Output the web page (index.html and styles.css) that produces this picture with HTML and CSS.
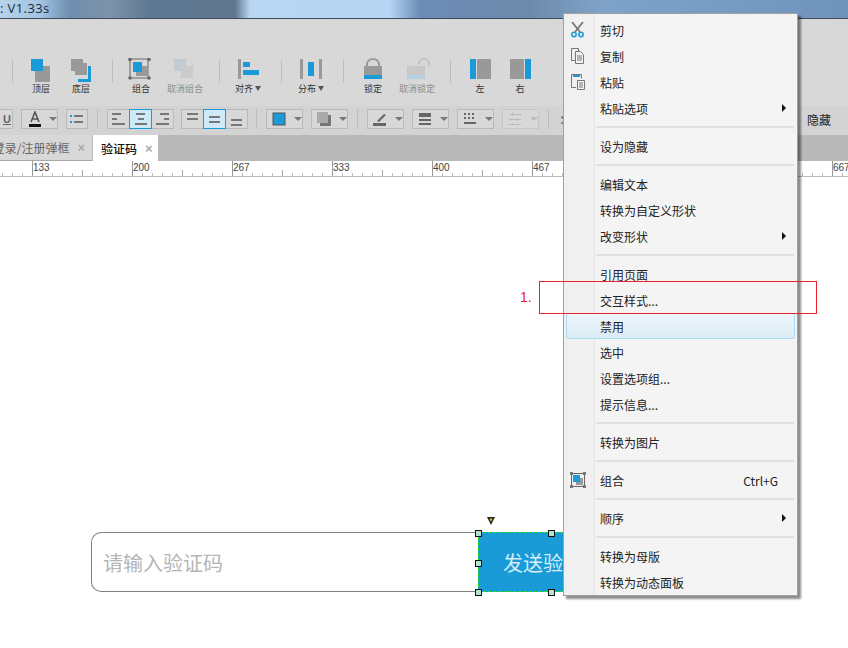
FILE: index.html
```html
<!DOCTYPE html>
<html lang="zh-CN">
<head>
  <meta charset="UTF-8">
  <title>验证码</title>
  <link rel="stylesheet" href="styles.css">
</head>
<body>
  <div class="app">
    <div class="titlebar">: V1.33s</div>

    <div class="toolbar">
      <span class="tool-sep first"></span>
      <div class="tool w40">
        <svg width="40" height="24"><path fill="#999" d="M24 13h2v-4h3v16h-15v-4h10z" transform="translate(0 -1)"/><rect x="14" y="8" width="12" height="12" fill="#999"/><rect x="10" y="1" width="12" height="12" fill="#1a9bd8"/></svg>
        <span>顶层</span>
      </div>
      <div class="tool w40">
        <svg width="40" height="24"><rect x="10" y="1" width="12" height="12" fill="#999"/><rect x="14" y="5" width="12" height="12" fill="#999"/><path fill="#1a9bd8" d="M27 8h3v16h-13v-3h10z"/></svg>
        <span>底层</span>
      </div>
      <span class="tool-sep s1"></span>
      <div class="tool w44">
        <svg width="44" height="24"><rect x="11" y="1" width="18" height="19" fill="none" stroke="#666"/><circle cx="11" cy="1.5" r="1.8" fill="#666"/><circle cx="30" cy="1.5" r="1.8" fill="#666"/><circle cx="11" cy="20" r="1.8" fill="#666"/><circle cx="30" cy="20" r="1.8" fill="#666"/><rect x="17" y="8" width="12" height="10" fill="#999"/><rect x="14" y="4" width="9" height="10" fill="#1a9bd8"/></svg>
        <span>组合</span>
      </div>
      <div class="tool w44 off">
        <svg width="44" height="24"><rect x="11" y="1" width="12" height="12" fill="#c0ccd2"/><rect x="18" y="8" width="12" height="12" fill="#cbcbcb"/><circle cx="11" cy="1.5" r="1.3" fill="#ccc"/><circle cx="23" cy="1.5" r="1.3" fill="#ccc"/><circle cx="18" cy="20" r="1.3" fill="#ccc"/><circle cx="30" cy="8" r="1.3" fill="#ccc"/></svg>
        <span>取消组合</span>
      </div>
      <span class="tool-sep s2"></span>
      <div class="tool w44">
        <svg width="44" height="24"><rect x="12" y="1" width="3" height="20" fill="#999"/><rect x="17" y="4" width="7" height="5" fill="#1a9bd8"/><rect x="17" y="12" width="16" height="5" fill="#1a9bd8"/></svg>
        <span>对齐 <i class="mini-caret"></i></span>
      </div>
      <span class="tool-sep s3"></span>
      <div class="tool w44">
        <svg width="44" height="24"><rect x="11" y="1" width="3" height="20" fill="#999"/><rect x="19" y="4" width="6" height="14" fill="#1a9bd8"/><rect x="30" y="1" width="3" height="20" fill="#999"/></svg>
        <span>分布 <i class="mini-caret"></i></span>
      </div>
      <span class="tool-sep s4"></span>
      <div class="tool w44">
        <svg width="44" height="24"><path d="M16 8V6a6 5 0 0 1 12 0v2" fill="none" stroke="#999" stroke-width="2"/><rect x="13" y="8" width="18" height="9" fill="#999"/><rect x="13" y="17" width="18" height="4" fill="#1a9bd8"/></svg>
        <span>锁定</span>
      </div>
      <div class="tool w44 off">
        <svg width="44" height="24"><path d="M24 7V5a5 4 0 0 1 10 0v3" fill="none" stroke="#c4c4c4" stroke-width="2"/><rect x="12" y="8" width="18" height="9" fill="#c8c8c8"/><rect x="12" y="17" width="18" height="4" fill="#b5d0de"/></svg>
        <span>取消锁定</span>
      </div>
      <span class="tool-sep s5"></span>
      <div class="tool w40">
        <svg width="40" height="24"><rect x="10" y="1" width="6" height="20" fill="#1a9bd8"/><rect x="17" y="1" width="14" height="20" fill="#999"/></svg>
        <span>左</span>
      </div>
      <div class="tool w40">
        <svg width="40" height="24"><rect x="10" y="1" width="14" height="20" fill="#999"/><rect x="25" y="1" width="6" height="20" fill="#1a9bd8"/></svg>
        <span>右</span>
      </div>
    </div>

    <div class="formatbar">
      <div class="fbtn underline"><span>U</span></div>
      <div class="fbtn drop w37">
        <svg width="16" height="16"><path d="M4 11 8 1l4 10M5.500 8h5" fill="none" stroke="#555" stroke-width="1.600"/><rect x="2" y="13" width="12" height="3" fill="#111"/></svg>
        <i class="caret"></i>
      </div>
      <div class="fbtn w22">
        <svg width="14" height="10"><path d="M0 1h2v2H0zM0 7h2v2H0z" fill="#1a9bd8"/><path d="M4 1h9v2H4zM4 7h9v2H4z" fill="#777"/></svg>
      </div>
      <span class="fmt-sep"></span>
      <div class="fgroup">
        <div class="fbtn w22 seg"><svg width="14" height="12"><path d="M0 0h9v2H0zM0 5h5v2H0zM0 10h13v2H0z" fill="#777"/></svg></div>
        <div class="fbtn w22 seg on"><svg width="14" height="12"><path d="M2 0h9v2H2zM4 5h6v2H4zM1 10h12v2H1z" fill="#777"/></svg></div>
        <div class="fbtn w22 seg"><svg width="14" height="12"><path d="M4 0h9v2H4zM8 5h5v2H8zM0 10h13v2H0z" fill="#777"/></svg></div>
      </div>
      <div class="fgroup">
        <div class="fbtn w22 seg valign-top"><svg width="12" height="7"><path d="M0 0h11v2H0zM0 5h11v2H0z" fill="#777"/></svg></div>
        <div class="fbtn w22 seg on"><svg width="12" height="7"><path d="M0 0h11v2H0zM0 5h11v2H0z" fill="#777"/></svg></div>
        <div class="fbtn w22 seg valign-bottom"><svg width="12" height="7"><path d="M0 0h11v2H0zM0 5h11v2H0z" fill="#777"/></svg></div>
      </div>
      <span class="fmt-sep"></span>
      <div class="fbtn drop w37">
        <svg width="14" height="14"><rect x="1" y="1" width="12" height="12" fill="#1a9bd8" stroke="#555"/></svg>
        <i class="caret"></i>
      </div>
      <div class="fbtn drop w37">
        <svg width="14" height="14"><rect x="3" y="3" width="11" height="11" fill="#777"/><rect x="0" y="0" width="11" height="11" fill="#aaa"/></svg>
        <i class="caret"></i>
      </div>
      <span class="fmt-sep"></span>
      <div class="fbtn drop w37">
        <svg width="14" height="14"><path d="M4 9 11 2l2 1-7 7z" fill="#666"/><rect x="0" y="11" width="13" height="3" fill="#666"/></svg>
        <i class="caret"></i>
      </div>
      <div class="fbtn drop w37">
        <svg width="14" height="12"><path d="M1 0h12v4H1zM1 6h12v2H1zM1 10h12v2H1z" fill="#666"/></svg>
        <i class="caret"></i>
      </div>
      <div class="fbtn drop w37">
        <svg width="14" height="12"><path d="M1 0h2v2H1zM5 0h2v2H5zM9 0h2v2H9zM1 4h2v2H1zM5 4h2v2H5zM9 4h2v2H9zM1 9h12v2H1z" fill="#666"/></svg>
        <i class="caret"></i>
      </div>
      <div class="fbtn drop w37 muted">
        <svg width="14" height="12"><path d="M1 1h12v1H1zM1 6h12v1H1zM1 11h12v1H1z" fill="#bbb"/><path d="M4 0h1v3H4zM9 5h1v3H9zM4 10h1v2H4z" fill="#bbb"/></svg>
        <i class="caret"></i>
      </div>
      <span class="fmt-sep"></span>
      <span class="more">×</span>
      <span class="hide-label">隐藏</span>
    </div>

    <div class="tabs">
      <div class="tab first"><span>登录/注册弹框</span><b>×</b></div>
      <div class="tab active"><span>验证码</span><b>×</b></div>
    </div>

    <div class="ruler">
      <span>133</span><span>200</span><span>267</span><span>333</span><span>400</span><span>467</span><span>533</span><span>600</span><span>667</span>
    </div>

    <div class="canvas">
      <div class="code-input">请输入验证码</div>
      <div class="send-btn">发送验证码</div>
      <i class="handle h1"></i>
      <i class="handle h2"></i>
      <i class="handle h3"></i>
      <i class="handle h4"></i>
      <i class="handle h5"></i>
      <svg class="flag" width="9" height="9"><path d="M0 0h8L4 8z" fill="#222"/><path d="M2.500 1.500h3L4 5z" fill="#e8c020"/></svg>
    </div>
  </div>

  <div class="menu">
    <div class="menu-item">
      <span class="menu-icon"><svg width="16" height="16"><path d="M2 0l8 10M13 0 5 10" stroke="#777" stroke-width="1.800" fill="none"/><circle cx="4" cy="12.500" r="2.200" fill="none" stroke="#1a9bd8" stroke-width="1.500"/><circle cx="11" cy="12.500" r="2.200" fill="none" stroke="#1a9bd8" stroke-width="1.500"/></svg></span>
      <span class="menu-label">剪切</span>
    </div>
    <div class="menu-item">
      <span class="menu-icon"><svg width="16" height="16"><path d="M1.500.5h7v3M5 12.500H1.500V.5" fill="none" stroke="#777"/><path d="M5.500 3.500h5l3 3v9h-8z" fill="#f3f3f3" stroke="#777"/><path d="M7 8h5M7 10h5M7 12h5" stroke="#777"/></svg></span>
      <span class="menu-label">复制</span>
    </div>
    <div class="menu-item">
      <span class="menu-icon"><svg width="16" height="16"><path d="M6 13.500H1.500V.5h10v4" fill="none" stroke="#777"/><rect x="3" y="1" width="7" height="2" fill="#1a9bd8"/><path d="M7.500 6.500h7v9h-7z" fill="#f3f3f3" stroke="#777"/><path d="M9 9h4M9 11h4M9 13h4" stroke="#777"/></svg></span>
      <span class="menu-label">粘贴</span>
    </div>
    <div class="menu-item">
      <span class="menu-icon"></span>
      <span class="menu-label">粘贴选项</span>
      <i class="sub-arrow"></i>
    </div>
    <div class="menu-sep"></div>
    <div class="menu-item"><span class="menu-icon"></span><span class="menu-label">设为隐藏</span></div>
    <div class="menu-sep"></div>
    <div class="menu-item"><span class="menu-icon"></span><span class="menu-label">编辑文本</span></div>
    <div class="menu-item"><span class="menu-icon"></span><span class="menu-label">转换为自定义形状</span></div>
    <div class="menu-item">
      <span class="menu-icon"></span>
      <span class="menu-label">改变形状</span>
      <i class="sub-arrow"></i>
    </div>
    <div class="menu-sep"></div>
    <div class="menu-item"><span class="menu-icon"></span><span class="menu-label">引用页面</span></div>
    <div class="menu-item"><span class="menu-icon"></span><span class="menu-label">交互样式...</span></div>
    <div class="menu-item hover"><span class="menu-icon"></span><span class="menu-label">禁用</span></div>
    <div class="menu-item"><span class="menu-icon"></span><span class="menu-label">选中</span></div>
    <div class="menu-item"><span class="menu-icon"></span><span class="menu-label">设置选项组...</span></div>
    <div class="menu-item"><span class="menu-icon"></span><span class="menu-label">提示信息...</span></div>
    <div class="menu-sep"></div>
    <div class="menu-item"><span class="menu-icon"></span><span class="menu-label">转换为图片</span></div>
    <div class="menu-sep"></div>
    <div class="menu-item">
      <span class="menu-icon"><svg width="16" height="16"><rect x="1.500" y="1.500" width="13" height="13" fill="none" stroke="#666"/><path d="M0 0h3v3H0zM13 0h3v3h-3zM0 13h3v3H0zM13 13h3v3h-3z" fill="#777"/><rect x="6" y="6" width="7" height="7" fill="#999"/><rect x="3" y="3" width="7" height="7" fill="#1a9bd8"/></svg></span>
      <span class="menu-label">组合</span>
      <span class="shortcut">Ctrl+G</span>
    </div>
    <div class="menu-sep"></div>
    <div class="menu-item">
      <span class="menu-icon"></span>
      <span class="menu-label">顺序</span>
      <i class="sub-arrow"></i>
    </div>
    <div class="menu-sep"></div>
    <div class="menu-item"><span class="menu-icon"></span><span class="menu-label">转换为母版</span></div>
    <div class="menu-item"><span class="menu-icon"></span><span class="menu-label">转换为动态面板</span></div>
  </div>

  <span class="note-num">1.</span>
  <div class="note-box"></div>
</body>
</html>
```

FILE: styles.css
```css
* {
  box-sizing: border-box;
}

html, body {
  margin: 0;
  height: 100%;
  overflow: hidden;
}

body {
  position: relative;
  background: #fff;
  color: #222;
  font-family: "Noto Sans CJK SC", "Liberation Sans", sans-serif;
  font-size: 12px;
}

.app {
  height: 648px;
  display: flex;
  flex-direction: column;
}

/* title bar, blurred window glass behind it */
.titlebar {
  height: 19px;
  padding: 0 0 2px 0;
  font-family: "Open Sans", sans-serif;
  font-size: 13px;
  line-height: 17px;
  letter-spacing: .4px;
  color: #1c2a3a;
  border-bottom: 1px solid #3e4a5c;
  background: linear-gradient(90deg, #b7d2ea 0, #a4c4e2 40px, #6f8fb0 70px, #7d93aa 110px, #5d7892 150px, #60778f 235px, #b7d6f2 250px, #b5d5f4 390px, #6c8cb8 420px, #6d8aab 530px, #7fa3c8 600px, #6f93bb 848px);
}

.toolbar {
  height: 87px;
  flex: none;
  display: flex;
  align-items: flex-start;
  padding-top: 39px;
  background: #d8d8d8;
}

.tool {
  flex: none;
  display: flex;
  flex-direction: column;
  align-items: center;
  height: 46px;
  font-size: 9px;
  line-height: 12px;
  color: #333;
  white-space: nowrap;
}

.tool span {
  margin-top: 1px;
}

.tool.w40 {
  width: 40px;
}

.tool.w44 {
  width: 44px;
}

.tool.off {
  color: #8c8c8c;
}

.mini-caret {
  display: inline-block;
  width: 0;
  height: 0;
  border: 3px solid transparent;
  border-top: 5px solid #555;
  border-bottom: 0;
  vertical-align: 1px;
}

.tool-sep {
  flex: none;
  width: 1px;
  height: 23px;
  margin-top: 2px;
  background: #bdbdbd;
}

.tool-sep.first {
  margin-left: 12px;
  margin-right: 8px;
}

.tool-sep.s1 {
  margin-left: 11px;
  margin-right: 6px;
}

.tool-sep.s2 {
  margin-left: 12px;
  margin-right: 6px;
}

.tool-sep.s3 {
  margin-left: 11px;
  margin-right: 7px;
}

.tool-sep.s4 {
  margin-left: 10px;
  margin-right: 7px;
}

.tool-sep.s5 {
  margin-left: 11px;
  margin-right: 9px;
}

.formatbar {
  height: 29px;
  flex: none;
  display: flex;
  align-items: center;
  padding-bottom: 4px;
  padding-top: 1px;
  background: #d3d3d3;
  gap: 8px;
}

.fbtn {
  flex: none;
  height: 20px;
  display: flex;
  align-items: center;
  justify-content: center;
  border: 1px solid #b9b9b9;
  background: #d8d8d8;
}

.fbtn.underline {
  width: 13px;
  justify-content: flex-end;
  padding-right: 1px;
  border-left: 0;
  font: bold 11px "Liberation Sans", sans-serif;
  color: #666;
  text-decoration: underline;
}

.fbtn.w22 {
  width: 22px;
}

.fbtn.w37 {
  width: 37px;
}

.fbtn.drop {
  justify-content: flex-start;
  padding-left: 5px;
  gap: 8px;
}

.fbtn.muted {
  border-color: #c6c6c6;
}

.fbtn.seg {
  margin-right: -1px;
  width: 23px;
}

.fbtn.on {
  position: relative;
  z-index: 1;
  border-color: #1a9bd8;
  background: #cfeaf7;
}

.fbtn.valign-top {
  align-items: flex-start;
  padding-top: 3px;
}

.fbtn.valign-bottom {
  align-items: flex-end;
  padding-bottom: 2px;
}

.fgroup {
  flex: none;
  display: flex;
  width: 66px;
}

.caret {
  width: 0;
  height: 0;
  border: 4px solid transparent;
  border-top: 4px solid #777;
  border-bottom: 0;
}

.muted .caret {
  border-top-color: #bbb;
}

.fmt-sep {
  flex: none;
  width: 1px;
  height: 20px;
  background: #bdbdbd;
  margin: 0 1px;
}

.more {
  font-size: 12px;
  color: #222;
  margin-left: 1px;
}

.hide-label {
  margin-left: 228px;
  font-size: 12px;
}

.tabs {
  height: 26px;
  flex: none;
  display: flex;
  gap: 1px;
  background: #b9b9b9;
}

.tab {
  height: 26px;
  display: flex;
  align-items: center;
  flex: none;
  overflow: hidden;
  white-space: nowrap;
}

.tab b {
  font: bold 13px "Liberation Sans", sans-serif;
  color: #aaa;
  margin-left: 8px;
}

.tab.first {
  width: 92px;
  justify-content: flex-end;
  padding-right: 7px;
  background: #d8d8d8;
  color: #666;
  border-bottom: 1px solid #aaa;
}

.tab.active {
  width: 65px;
  padding-left: 8px;
  background: #fff;
  color: #111;
  font-weight: 500;
}

.ruler {
  height: 16px;
  flex: none;
  display: flex;
  padding-left: 32px;
  font: 10px/13px "Liberation Sans", sans-serif;
  color: #444;
  border-bottom: 1px solid #bbb;
  background-color: #fff;
  background-image:
    linear-gradient(#999, #999),
    linear-gradient(#aaa, #aaa),
    linear-gradient(#bbb, #bbb);
  background-size: 1px 15px, 1px 6px, 1px 3px;
  background-position: 32px 0, 82px 100%, 2px 100%;
  background-repeat: no-repeat;
  background-repeat: repeat-x;
}

.ruler {
  background-size: 100px 15px, 100px 6px, 10px 3px;
  background-image:
    linear-gradient(90deg, #999 1px, transparent 1px),
    linear-gradient(90deg, #aaa 1px, transparent 1px),
    linear-gradient(90deg, #bbb 1px, transparent 1px);
}

.ruler span {
  flex: none;
  width: 100px;
  padding-left: 1px;
}

.canvas {
  position: relative;
  flex: 1;
  background: #fff;
}

.code-input {
  position: absolute;
  left: 91px;
  top: 355px;
  width: 388px;
  height: 60px;
  display: flex;
  align-items: center;
  padding-left: 11px;
  font-size: 20px;
  color: #b5b5b5;
  background: #fff;
  border: 1px solid #808080;
  border-right: 0;
  border-radius: 10px 0 0 10px;
}

.send-btn {
  position: absolute;
  left: 478px;
  top: 355px;
  width: 130px;
  height: 60px;
  display: flex;
  align-items: center;
  padding-left: 24px;
  font-size: 20px;
  color: #d6eefa;
  background: #1a9bd8;
  border: 1px dashed #1fe01f;
  white-space: nowrap;
}

.handle {
  position: absolute;
  width: 7px;
  height: 7px;
  background: #b4e4cf;
  border: 1px solid #111;
}

.h1 { left: 475px; top: 353px; }
.h2 { left: 548px; top: 353px; }
.h3 { left: 475px; top: 383px; }
.h4 { left: 475px; top: 412px; }
.h5 { left: 548px; top: 412px; }

.flag {
  position: absolute;
  left: 487px;
  top: 340px;
}

/* context menu sits over everything */
.menu {
  position: absolute;
  left: 563px;
  top: 13px;
  width: 235px;
  height: 583px;
  padding: 3px 2px 0;
  border: 1px solid #a0a0a0;
  background: linear-gradient(90deg, #f0f0f0 30px, #e4e4e4 30px, #e4e4e4 31px, #f4f4f4 31px);
  box-shadow: 3px 3px 2px rgba(0, 0, 0, .45);
}

.menu-item {
  height: 26px;
  display: flex;
  align-items: center;
  border: 1px solid transparent;
  border-radius: 2px;
  color: #222;
}

.menu-item.hover {
  border-color: #aedcf5;
  background: linear-gradient(#edf6fb, #dbecf6);
}

.menu-icon {
  flex: none;
  width: 27px;
  margin-right: 6px;
  display: flex;
  justify-content: center;
  padding-right: 5px;
}

.menu-label {
  flex: 1;
}

.shortcut {
  margin-right: 16px;
  font-size: 12px;
}

.sub-arrow {
  width: 0;
  height: 0;
  margin-right: 8px;
  border: 4px solid transparent;
  border-left: 4px solid #111;
  border-right: 0;
}

.menu-sep {
  height: 2px;
  margin: 5px 1px 5px 30px;
  background: #e0e0e0;
}

/* red annotation laid on the screenshot */
.note-num {
  position: absolute;
  left: 520px;
  top: 288px;
  font: 14px/18px "Liberation Sans", sans-serif;
  color: #e8222f;
}

.note-box {
  position: absolute;
  left: 539px;
  top: 281px;
  width: 278px;
  height: 33px;
  border: 1px solid #e8222f;
}
```
